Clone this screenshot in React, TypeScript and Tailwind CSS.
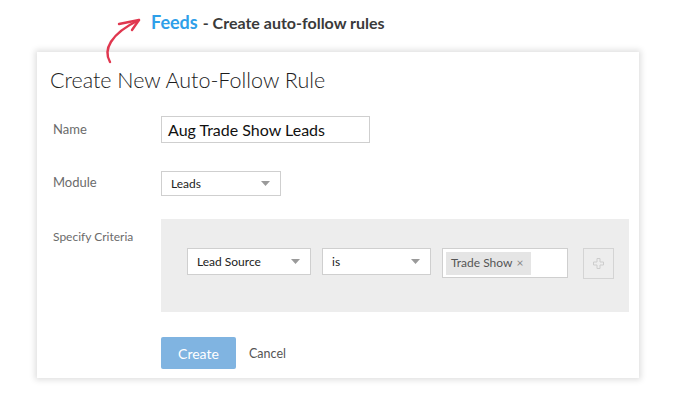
import React from "react";

function Caret() {
    return (
        <svg width="9" height="5" viewBox="0 0 9 5" className="shrink-0">
            <path d="M0 0 L9 0 L4.5 5 Z" fill="#9a9a9a"/>
        </svg>
    );
}

function Select({label, className}: { label: string; className: string }) {
    return (
        <div className={`flex items-center justify-between bg-white border border-[#cfcfcf] pl-[9px] pr-[10px] text-[12px] text-[#222] ${className}`}>
            <span>{label}</span>
            <Caret/>
        </div>
    );
}

export default function App() {
    return (
        <div className="relative w-[681px] h-[399px] bg-white overflow-hidden" style={{fontFamily: "Lato, 'Open Sans', sans-serif"}}>
            {/* curly arrow pointing at the header */}
            <svg className="absolute left-[100px] top-[12px]" width="50" height="56" viewBox="100 12 50 56" fill="none">
                <path d="M110 62 C103 50 110 34 139 20" stroke="#e0374f" strokeWidth="2.4" strokeLinecap="round"/>
                <path d="M119 24 L139 20 L132 30" stroke="#e0374f" strokeWidth="2.4" strokeLinecap="round" strokeLinejoin="round"/>
            </svg>

            <div className="pl-[151px] pt-[9px] h-[42px] flex items-baseline gap-[5px] font-bold">
                <span className="text-[18px] text-[#2e9fe9]">Feeds</span>
                <span className="text-[16px] text-[#3a3a3a]">- Create auto-follow rules</span>
            </div>

            <div className="ml-[37px] mt-[10px] w-[602px] h-[326px] bg-white shadow-[0_0_6px_2px_rgba(0,0,0,0.13)] pl-[13px] pt-[14px]">
                <h1 className="text-[21.5px] font-light text-[#1c1c1c] leading-[28px]">Create New Auto-Follow Rule</h1>

                <div className="flex items-center mt-[22px] h-[27px]">
                    <div className="w-[111px] pl-[3px] text-[13px] text-[#6b6b6b]">Name</div>
                    <div className="w-[209px] h-[27px] border border-[#cfcfcf] flex items-center pl-[6px] text-[16px] text-[#111]">
                        Aug Trade Show Leads
                    </div>
                </div>

                <div className="flex items-start mt-[28px]">
                    <div className="w-[111px] pl-[3px] text-[13px] text-[#6b6b6b] pt-[2px]">Module</div>
                    <Select label="Leads" className="w-[120px] h-[25px]"/>
                </div>

                <div className="flex items-start mt-[23px]">
                    <div className="w-[111px] pl-[3px] pt-[9px] text-[12px] text-[#6b6b6b]">Specify Criteria</div>
                    <div className="w-[468px] h-[93px] bg-[#ededed] flex items-start pt-[29px] pl-[26px]">
                        <Select label="Lead Source" className="w-[124px] h-[27px]"/>
                        <Select label="is" className="w-[109px] h-[27px] ml-[11px]"/>
                        <div className="ml-[11px] w-[126px] h-[30px] bg-white border border-[#cfcfcf] flex items-center pl-[3px]">
                            <div className="h-[23px] bg-[#e5e5e5] flex items-center pl-[5px] pr-[8px] text-[12px] text-[#555] gap-[4px]">
                                Trade Show <span className="text-[12px] text-[#888]">×</span>
                            </div>
                        </div>
                        <div className="ml-[15px] w-[31px] h-[31px] border border-[#d4d4d4] flex items-center justify-center">
                            <svg width="11" height="11" viewBox="0 0 11 11" fill="none">
                                <path d="M4 0.5 H7 V4 H10.5 V7 H7 V10.5 H4 V7 H0.5 V4 H4 Z" stroke="#cdcdcd" strokeWidth="1"/>
                            </svg>
                        </div>
                    </div>
                </div>

                <div className="flex items-center mt-[25px] ml-[111px] gap-[13px]">
                    <div className="w-[75px] h-[32px] rounded-[2px] bg-[#80b4e1] text-white text-[14px] flex items-center justify-center">Create</div>
                    <span className="text-[12.5px] text-[#555] pt-[3px]">Cancel</span>
                </div>
            </div>
        </div>
    );
}
